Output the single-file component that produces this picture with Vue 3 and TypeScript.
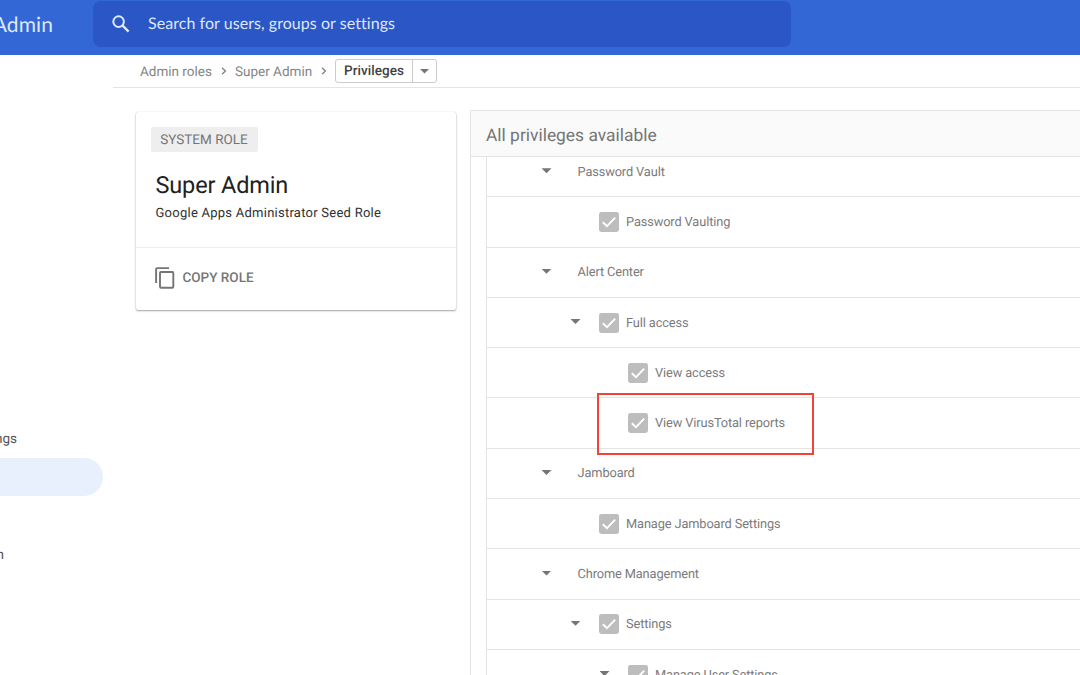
<script setup lang="ts">
interface Privilege {
  label: string
  level: number
  expandable?: boolean
  checkbox?: boolean
  highlighted?: boolean
}

const privileges: Privilege[] = [
  { label: 'Password Vault', level: 0, expandable: true },
  { label: 'Password Vaulting', level: 1, checkbox: true },
  { label: 'Alert Center', level: 0, expandable: true },
  { label: 'Full access', level: 1, expandable: true, checkbox: true },
  { label: 'View access', level: 2, checkbox: true },
  { label: 'View VirusTotal reports', level: 2, checkbox: true, highlighted: true },
  { label: 'Jamboard', level: 0, expandable: true },
  { label: 'Manage Jamboard Settings', level: 1, checkbox: true },
  { label: 'Chrome Management', level: 0, expandable: true },
  { label: 'Settings', level: 1, expandable: true, checkbox: true },
  { label: 'Manage User Settings', level: 2, expandable: true, checkbox: true },
]
</script>

<template>
  <div class="page">
    <header class="topbar">
      <div class="brand"><span>Admin</span></div>
      <div class="search">
        <svg class="search-icon" viewBox="0 0 18 18">
          <circle cx="6.6" cy="6.6" r="5.3" fill="none" stroke="currentColor" stroke-width="2" />
          <path d="M10.6 10.6 16.6 16.6" fill="none" stroke="currentColor" stroke-width="2.3" />
        </svg>
        <span class="search-text">Search for users, groups or settings</span>
      </div>
    </header>

    <div class="body">
      <nav class="sidebar">
        <div class="nav-item first"><span>ngs</span></div>
        <div class="nav-item active"></div>
        <div class="nav-item gap"></div>
        <div class="nav-item last"><span>n</span></div>
      </nav>

      <main class="main">
        <div class="crumbs">
          <span class="crumb one">Admin roles</span>
          <svg class="chevron" viewBox="0 0 6 8"><path d="M1 .8 4.4 4 1 7.2" /></svg>
          <span class="crumb two">Super Admin</span>
          <svg class="chevron" viewBox="0 0 6 8"><path d="M1 .8 4.4 4 1 7.2" /></svg>
          <div class="picker">
            <span class="picker-label">Privileges</span>
            <span class="picker-arrow"><i class="caret"></i></span>
          </div>
        </div>

        <div class="content">
          <section class="card">
            <div class="card-top">
              <span class="badge">SYSTEM ROLE</span>
              <h1>Super Admin</h1>
              <p>Google Apps Administrator Seed Role</p>
            </div>
            <div class="card-action">
              <svg class="copy-icon" viewBox="0 0 20 22">
                <path d="M1.1 16V2.1Q1.1 1.1 2.1 1.1H14" />
                <rect x="5" y="5" width="13.3" height="15.8" rx="1" />
              </svg>
              <span>COPY ROLE</span>
            </div>
          </section>

          <section class="panel">
            <h2>All privileges available</h2>
            <div class="tree">
              <div v-for="p in privileges" :key="p.label" class="row" :class="'level-' + p.level">
                <span class="toggle"><i v-if="p.expandable" class="caret"></i></span>
                <svg v-if="p.checkbox" class="check" viewBox="0 0 20 20">
                  <rect width="20" height="20" rx="2.4" fill="#bdbdbd" />
                  <path d="M3.8 10.2 8 14.2 16.2 5.6" fill="none" stroke="#fff" stroke-width="1.9" />
                </svg>
                <span class="label">{{ p.label }}</span>
                <span v-if="p.highlighted" class="highlight"></span>
              </div>
            </div>
          </section>
        </div>
      </main>
    </div>
  </div>
</template>

<style>
body { margin: 0; overflow: hidden; }
</style>

<style scoped>
* { box-sizing: border-box; }
.page {
  width: 1080px; height: 675px; overflow: hidden; display: flex; flex-direction: column;
  background: #fff; color: #757575; font-family: Roboto, "Liberation Sans", sans-serif;
  text-rendering: geometricPrecision;
}
.topbar {
  height: 55px; flex: none; display: flex; background: #3367d6; color: #dfe7f8;
  font-family: Lato, Roboto, sans-serif;
}
.brand {
  width: 53px; margin-right: 40px; flex: none; display: flex; justify-content: flex-end;
  font-size: 21px; line-height: 50px; letter-spacing: .1px;
}
.search {
  width: 698px; height: 46px; margin-top: 1px; border-radius: 8px; background: #2a56c6;
  display: flex; align-items: center; padding-left: 18.5px;
}
.search-icon { width: 18px; height: 18px; margin-right: 18.5px; }
.search-text { margin-top: -1px; font-size: 16px; letter-spacing: .05px; white-space: nowrap; }
.body { flex: 1; min-height: 0; display: flex; }
.sidebar { width: 113px; flex: none; padding-top: 364px; color: #505357; font-size: 13.5px; }
.nav-item { height: 38.6px; display: flex; align-items: center; justify-content: flex-end; }
.nav-item span { padding-top: 2px; }
.first { width: 17px; }
.last { width: 4px; }
.active { width: 103px; border-radius: 0 20px 20px 0; background: #e8f0fe; }
.main { flex: 1; min-width: 0; display: flex; flex-direction: column; }
.crumbs {
  height: 33px; flex: none; display: flex; align-items: center; padding-left: 27px;
  border-bottom: 1px solid #e4e4e4; font-size: 13.5px; color: #858585; white-space: nowrap;
}
.crumb { padding-top: 1px; }
.one { width: 81px; }
.two { width: 86px; }
.chevron { width: 6px; height: 8px; margin-right: 8px; }
.chevron path { fill: none; stroke: #858585; stroke-width: 1.4; }
.picker {
  width: 102px; height: 24px; display: flex; border: 1px solid #ccc; border-radius: 3px;
  color: #424242; font-weight: 500;
}
.picker-label { width: 77px; padding-left: 8px; line-height: 23px; letter-spacing: .05px; border-right: 1px solid #ccc; }
.picker-arrow { flex: 1; display: flex; align-items: center; justify-content: center; }
.caret { width: 10px; height: 5px; background: #757575; clip-path: polygon(0 0, 100% 0, 50% 100%); }
.content { flex: 1; min-height: 0; display: flex; padding-left: 23px; }
.card {
  width: 319.5px; height: 197.5px; margin: 24px 14.5px 0 0; flex: none; border-radius: 2px; background: #fff;
  box-shadow: 0 1px 2px rgba(0, 0, 0, .35), 0 0 1px rgba(0, 0, 0, .2);
}
.card-top { height: 135.5px; padding: 15px 0 0 19.5px; border-bottom: 1px solid #eee; white-space: nowrap; }
.badge {
  display: block; width: 107px; height: 25px; margin-left: -5px; border-radius: 2px; background: #eee;
  font-size: 13.5px; line-height: 26px; text-align: center;
}
.card h1 { margin: 19px 0 0; font-size: 23.5px; line-height: 28px; font-weight: 400; color: #212121; letter-spacing: -.15px; }
.card p { margin: 7px 0 0; font-size: 13px; line-height: 16px; color: #303030; letter-spacing: .25px; }
.card-action { height: 61px; display: flex; align-items: center; padding-left: 19px; font-size: 13.5px; font-weight: 500; }
.copy-icon { width: 20px; height: 22px; margin-right: 7.5px; }
.copy-icon * { fill: none; stroke: #757575; stroke-width: 1.9; }
.panel { flex: 1; min-width: 0; margin-top: 22px; border-left: 1px solid #e4e4e4; border-top: 1px solid #e4e4e4; }
.panel h2 {
  height: 46px; margin: 0; padding-left: 15px; border-bottom: 1px solid #e4e4e4; background: #fafafa;
  font-size: 17.4px; line-height: 50px; font-weight: 400; color: #757575;
}
.tree { height: 519px; margin-left: 15px; padding-top: 1px; border-left: 1px solid #e4e4e4; overflow: hidden; }
.row {
  position: relative; height: 50.3px; display: flex; align-items: center; padding-left: 54.5px;
  border-bottom: 1px solid #e4e4e4; font-size: 12.8px; letter-spacing: -.12px; white-space: nowrap;
}
.row:first-child { margin-top: -11px; }
.label { padding-top: 1px; color: #7b7b7b; }
.level-1 { padding-left: 83.5px; }
.level-2 { padding-left: 112.5px; }
.toggle { width: 28.5px; height: 7px; display: flex; align-items: flex-start; flex: none; }
.level-0 .toggle { width: 36px; }
.check { width: 20px; height: 20px; margin-right: 7px; flex: none; }
.highlight { position: absolute; left: 110px; top: -5px; width: 217px; height: 62px; border: 2px solid #f44336; z-index: 2; }
</style>
